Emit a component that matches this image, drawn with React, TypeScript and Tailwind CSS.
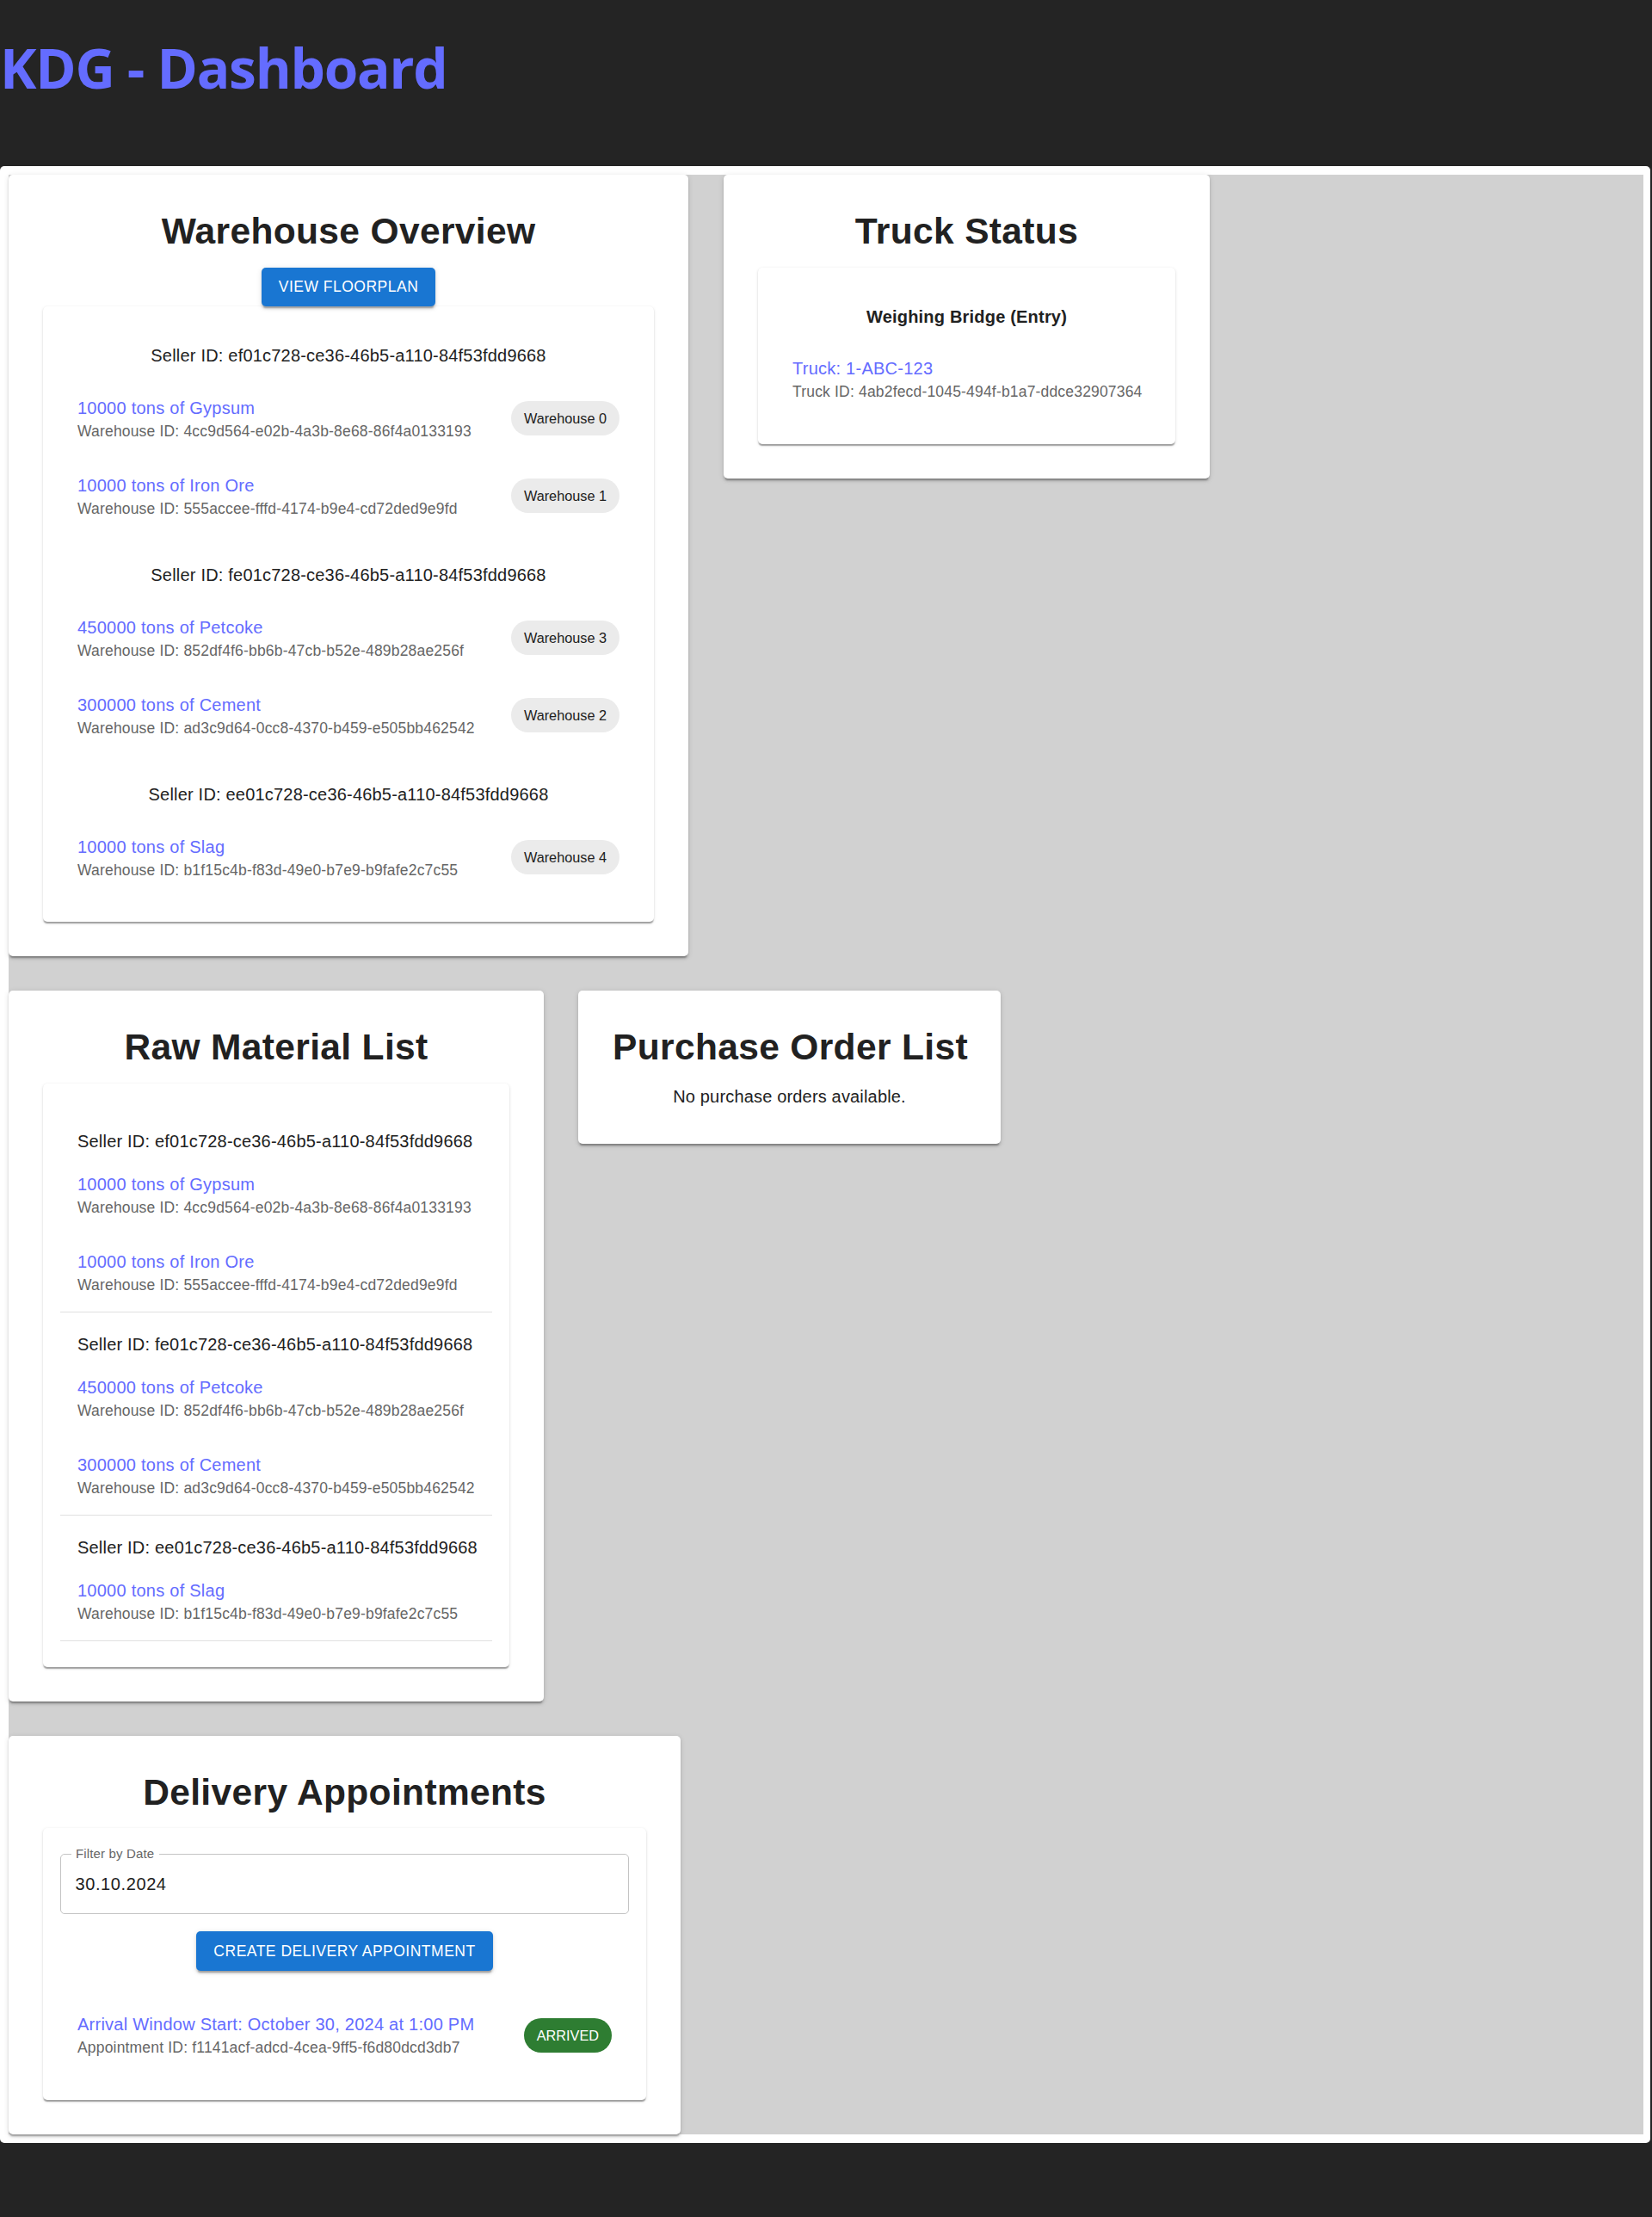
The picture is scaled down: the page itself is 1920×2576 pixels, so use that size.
import React from "react";

// shadows scaled like the reference (browser zoom 125%)
const cardShadow =
  "shadow-[0_3.75px_1.25px_-2.5px_rgba(0,0,0,0.2),0_2.5px_2.5px_0_rgba(0,0,0,0.14),0_1.25px_6.25px_0_rgba(0,0,0,0.12)]";
const paperShadow =
  "shadow-[0_2.5px_1.25px_-1.25px_rgba(0,0,0,0.2),0_1.25px_1.25px_0_rgba(0,0,0,0.14),0_1.25px_3.75px_0_rgba(0,0,0,0.12)]";
const buttonShadow =
  "shadow-[0_3.75px_1.25px_-2.5px_rgba(0,0,0,0.2),0_2.5px_2.5px_0_rgba(0,0,0,0.14),0_1.25px_6.25px_0_rgba(0,0,0,0.12)]";

interface Material {
  label: string;
  warehouseId: string;
  warehouse: string;
}

interface SellerGroup {
  sellerId: string;
  items: Material[];
}

const sellers: SellerGroup[] = [
  {
    sellerId: "ef01c728-ce36-46b5-a110-84f53fdd9668",
    items: [
      { label: "10000 tons of Gypsum", warehouseId: "4cc9d564-e02b-4a3b-8e68-86f4a0133193", warehouse: "Warehouse 0" },
      { label: "10000 tons of Iron Ore", warehouseId: "555accee-fffd-4174-b9e4-cd72ded9e9fd", warehouse: "Warehouse 1" },
    ],
  },
  {
    sellerId: "fe01c728-ce36-46b5-a110-84f53fdd9668",
    items: [
      { label: "450000 tons of Petcoke", warehouseId: "852df4f6-bb6b-47cb-b52e-489b28ae256f", warehouse: "Warehouse 3" },
      { label: "300000 tons of Cement", warehouseId: "ad3c9d64-0cc8-4370-b459-e505bb462542", warehouse: "Warehouse 2" },
    ],
  },
  {
    sellerId: "ee01c728-ce36-46b5-a110-84f53fdd9668",
    items: [
      { label: "10000 tons of Slag", warehouseId: "b1f15c4b-f83d-49e0-b7e9-b9fafe2c7c55", warehouse: "Warehouse 4" },
    ],
  },
];

const Card: React.FC<{ title: string; width: string; children: React.ReactNode }> = ({ title, width, children }) => (
  <div className={`${width} shrink-0 whitespace-nowrap bg-white rounded-[5px] p-[40px] ${cardShadow}`}>
    <h2 className="text-center text-[42.5px] leading-[52.5px] font-bold tracking-[0.35px] text-[#212121] mb-[15px]">
      {title}
    </h2>
    {children}
  </div>
);

const Paper: React.FC<{ children: React.ReactNode }> = ({ children }) => (
  <div className={`bg-white rounded-[5px] p-[20px] ${paperShadow}`}>{children}</div>
);

const ItemText: React.FC<{ primary: string; secondary: string }> = ({ primary, secondary }) => (
  <div className="flex flex-col">
    <span className="text-[20px] leading-[30px] tracking-[0.25px] text-[#646cff]">{primary}</span>
    <span className="text-[17.5px] leading-[25px] tracking-[0.18px] text-[#666666]">{secondary}</span>
  </div>
);

const Chip: React.FC<{ label: string; green?: boolean }> = ({ label, green }) => (
  <span
    className={`h-[40px] px-[15px] rounded-full flex items-center text-[16.25px] shrink-0 ${
      green ? "bg-[#2e7d32] text-white" : "bg-[#ebebeb] text-[#212121]"
    }`}
  >
    {label}
  </span>
);

const Button: React.FC<{ label: string }> = ({ label }) => (
  <button
    className={`bg-[#1976d2] text-white uppercase text-[17.5px] leading-[30.6px] font-medium tracking-[0.5px] px-[20px] py-[7.5px] rounded-[5px] ${buttonShadow}`}
  >
    {label}
  </button>
);

const WarehouseOverview = () => (
  <Card title="Warehouse Overview" width="w-[790px]">
    <div className="flex justify-center">
      <Button label="View Floorplan" />
    </div>
    <Paper>
      {sellers.map((s) => (
        <div key={s.sellerId} className="mt-[20px]">
          <div className="text-center text-[20px] leading-[35px] tracking-[0.2px] text-[#212121]">
            Seller ID: {s.sellerId}
          </div>
          <div className="py-[10px]">
            {s.items.map((it) => (
              <div key={it.warehouseId} className="h-[90px] px-[20px] flex items-center justify-between">
                <ItemText primary={it.label} secondary={`Warehouse ID: ${it.warehouseId}`} />
                <Chip label={it.warehouse} />
              </div>
            ))}
          </div>
        </div>
      ))}
    </Paper>
  </Card>
);

const TruckStatus = () => (
  <Card title="Truck Status" width="w-[565px]">
    <Paper>
      <div className="mt-[20px] text-center text-[20px] leading-[35px] font-bold tracking-[0.2px] text-[#212121]">
        Weighing Bridge (Entry)
      </div>
      <div className="py-[10px]">
        <div className="h-[90px] px-[20px] flex items-center">
          <ItemText primary="Truck: 1-ABC-123" secondary="Truck ID: 4ab2fecd-1045-494f-b1a7-ddce32907364" />
        </div>
      </div>
    </Paper>
  </Card>
);

const RawMaterialList = () => (
  <Card title="Raw Material List" width="w-[622px]">
    <Paper>
      <div className="py-[10px]">
        {sellers.map((s) => (
          <div key={s.sellerId}>
            <div className="pt-[20px] px-[20px] text-[20px] leading-[35px] tracking-[0.2px] text-[#212121]">
              Seller ID: {s.sellerId}
            </div>
            {s.items.map((it) => (
              <div key={it.warehouseId} className="h-[90px] px-[20px] flex items-center">
                <ItemText primary={it.label} secondary={`Warehouse ID: ${it.warehouseId}`} />
              </div>
            ))}
            <div className="h-px bg-[#e0e0e0]" />
          </div>
        ))}
      </div>
    </Paper>
  </Card>
);

const PurchaseOrderList = () => (
  <Card title="Purchase Order List" width="w-[491px]">
    <p className="text-center text-[20px] leading-[30px] tracking-[0.17px] text-[#212121]">
      No purchase orders available.
    </p>
  </Card>
);

const DeliveryAppointments = () => (
  <Card title="Delivery Appointments" width="w-[781px]">
    <Paper>
      <div className="relative mt-[10px] mb-[5px] h-[70px] border border-[#c4c4c4] rounded-[5px] px-[16.5px] pt-[19.6px]">
        <span className="absolute left-[11.5px] top-[-10px] px-[5.5px] bg-white text-[15px] leading-[18px] tracking-[0.15px] text-[#666666]">
          Filter by Date
        </span>
        <span className="text-[20px] leading-[28.75px] tracking-[0.6px] text-[#212121]">30.10.2024</span>
      </div>
      <div className="mt-[20px] flex justify-center">
        <Button label="Create Delivery Appointment" />
      </div>
      <div className="mt-[20px] py-[10px]">
        <div className="h-[90px] px-[20px] flex items-center justify-between">
          <ItemText
            primary="Arrival Window Start: October 30, 2024 at 1:00 PM"
            secondary="Appointment ID: f1141acf-adcd-4cea-9ff5-f6d80dcd3db7"
          />
          <Chip label="ARRIVED" green />
        </div>
      </div>
    </Paper>
  </Card>
);

export default function App() {
  return (
    <div className="min-h-[2576px] bg-[#242424] font-['Liberation_Sans',Arial,sans-serif]">
      <header className="h-[193px]">
        <h1 className="pt-[44px] text-[64px] leading-[70.4px] font-bold tracking-[-1.25px] text-[#646cff] font-['Open_Sans','Noto_Sans',sans-serif]">
          KDG - Dashboard
        </h1>
      </header>
      <main className="w-[1918px] bg-white rounded-[5px] p-[10px] pr-[8px]">
        <div className="bg-[#d1d1d1] flex flex-col gap-[40px]">
          <div className="flex items-start gap-[41px]">
            <WarehouseOverview />
            <TruckStatus />
          </div>
          <div className="flex items-start gap-[40px]">
            <RawMaterialList />
            <PurchaseOrderList />
          </div>
          <div className="flex items-start">
            <DeliveryAppointments />
          </div>
        </div>
      </main>
    </div>
  );
}
